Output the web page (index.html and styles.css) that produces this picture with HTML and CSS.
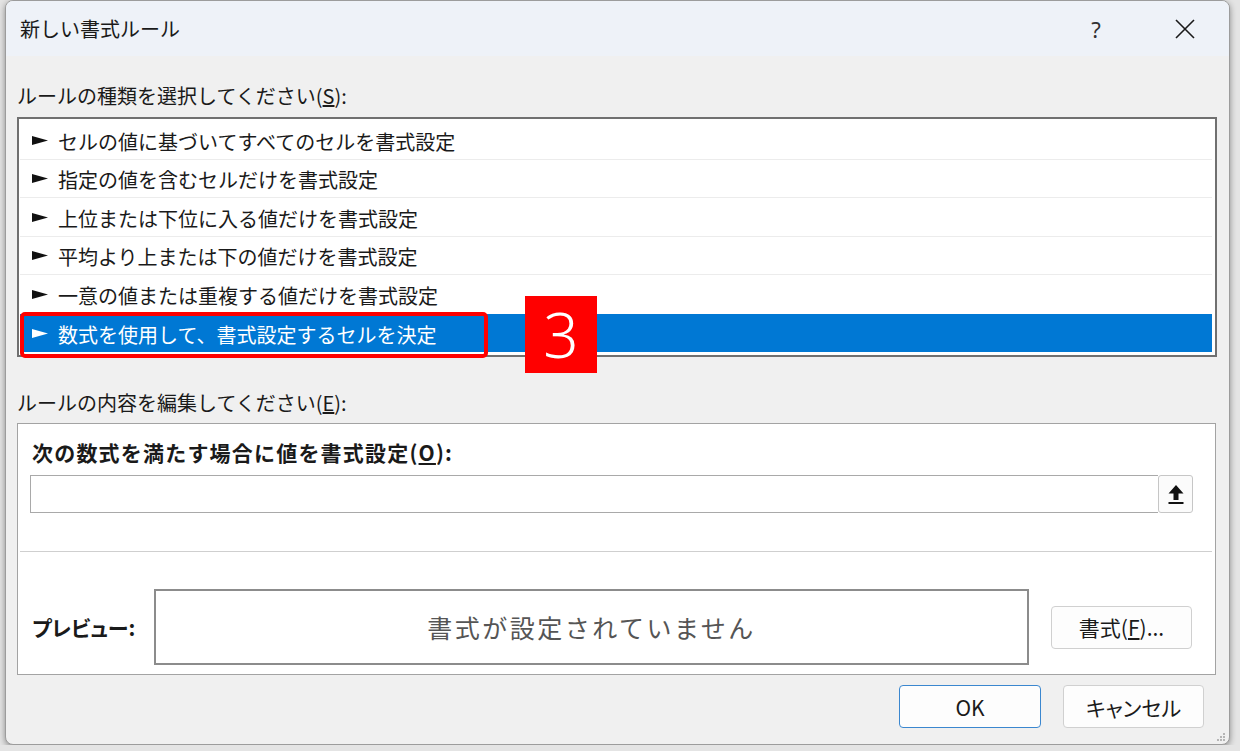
FILE: index.html
```html
<!DOCTYPE html>
<html>
<head>
    <meta charset="utf-8">
    <title>新しい書式ルール</title>
    <link rel="stylesheet" href="styles.css">
</head>
<body>
    <div class="dialog">
        <!-- Title bar -->
        <div class="titlebar">
            <span class="title">新しい書式ルール</span>
            <span class="tb-btn help">?</span>
            <span class="tb-btn close">
                <svg width="20" height="20" viewBox="0 0 20 20"><path d="M1 1 L19 19 M19 1 L1 19" stroke="#1a1a1a" stroke-width="1.6" fill="none"/></svg>
            </span>
        </div>

        <div class="content">
            <div class="label first">ルールの種類を選択してください(<u>S</u>):</div>

            <!-- Rule type list -->
            <div class="listbox">
                <div class="row"><svg class="arrow" viewBox="0 0 16 9"><polygon points="0,0 16,4.5 0,9"/></svg>セルの値に基づいてすべてのセルを書式設定</div>
                <div class="row"><svg class="arrow" viewBox="0 0 16 9"><polygon points="0,0 16,4.5 0,9"/></svg>指定の値を含むセルだけを書式設定</div>
                <div class="row"><svg class="arrow" viewBox="0 0 16 9"><polygon points="0,0 16,4.5 0,9"/></svg>上位または下位に入る値だけを書式設定</div>
                <div class="row"><svg class="arrow" viewBox="0 0 16 9"><polygon points="0,0 16,4.5 0,9"/></svg>平均より上または下の値だけを書式設定</div>
                <div class="row no-line"><svg class="arrow" viewBox="0 0 16 9"><polygon points="0,0 16,4.5 0,9"/></svg>一意の値または重複する値だけを書式設定</div>
                <div class="row selected"><svg class="arrow" viewBox="0 0 16 9"><polygon points="0,0 16,4.5 0,9"/></svg>数式を使用して、書式設定するセルを決定</div>

                <!-- annotation -->
                <div class="annot-box"></div>
                <div class="annot-num">3</div>
            </div>

            <div class="label second">ルールの内容を編集してください(<u>E</u>):</div>

            <!-- Rule description -->
            <div class="panel">
                <div class="panel-title">次の数式を満たす場合に値を書式設定(<u>O</u>):</div>
                <div class="formula">
                    <div class="formula-input"></div>
                    <div class="ref-btn">
                        <svg width="16" height="20" viewBox="0 0 16 20"><polygon points="8,1 15.5,9.5 10.5,9.5 10.5,16 5.5,16 5.5,9.5 0.5,9.5" fill="#111"/><rect x="0.5" y="18" width="15" height="2" fill="#111"/></svg>
                    </div>
                </div>
                <div class="divider"></div>
                <div class="preview-row">
                    <span class="preview-label">プレビュー:</span>
                    <div class="preview-box">書式が設定されていません</div>
                    <div class="btn fmt-btn">書式(<u>F</u>)...</div>
                </div>
            </div>

            <div class="footer">
                <div class="btn ok">OK</div>
                <div class="btn cancel">キャンセル</div>
            </div>
        </div>

        <svg class="grip" width="10" height="10" viewBox="0 0 10 10">
            <rect x="7" y="1" width="2" height="2" fill="#b5b5b5"/>
            <rect x="4" y="4" width="2" height="2" fill="#b5b5b5"/>
            <rect x="7" y="4" width="2" height="2" fill="#b5b5b5"/>
            <rect x="1" y="7" width="2" height="2" fill="#b5b5b5"/>
            <rect x="4" y="7" width="2" height="2" fill="#b5b5b5"/>
            <rect x="7" y="7" width="2" height="2" fill="#b5b5b5"/>
        </svg>
    </div>
</body>
</html>
```

FILE: styles.css
```css
body {
    margin: 0;
    background: #e4e4e4;
    font-family: "Noto Sans CJK JP", "Noto Sans", sans-serif;
    color: #1a1a1a;
}

.dialog {
    position: relative;
    margin-left: 5px;
    width: 1225px;
    height: 745px;
    box-sizing: border-box;
    border: 1px solid #9c9c9c;
    border-radius: 8px;
    background: #f0f0f0;
    overflow: hidden;
    box-shadow: 0 2px 6px rgba(0, 0, 0, 0.4);
}

/* Title bar */
.titlebar {
    height: 55px;
    display: flex;
    align-items: center;
    padding: 0 21px 0 14px;
    background: #eef2f8;
}

.title {
    font-size: 20px;
    flex: 1;
}

.tb-btn {
    width: 46px;
    display: flex;
    justify-content: center;
    align-items: center;
}

.help {
    font-family: "Noto Sans", sans-serif;
    font-size: 22px;
    color: #333;
}

.close {
    margin-left: 43px;
}

/* Content */
.content {
    padding: 0 12px 0 11px;
}

.label {
    height: 26px;
    line-height: 26px;
    font-size: 20px;
}

.label.first {
    margin-top: 27px;
}

.label.second {
    margin-top: 33px;
}

.listbox {
    position: relative;
    margin-top: 8px;
    height: 240px;
    box-sizing: border-box;
    border: 2px solid #707070;
    background: #fff;
    padding: 2px 3px 3px 1px;
}

.row {
    height: 38.5px;
    box-sizing: border-box;
    display: flex;
    align-items: center;
    padding: 3px 0 0 12px;
    font-size: 20px;
    border-bottom: 1px solid #ececec;
}

.row.no-line {
    border-bottom-color: transparent;
}

.row.selected {
    background: #0078d4;
    color: #fff;
    border-bottom: none;
}

.arrow {
    width: 16px;
    height: 9px;
    margin: -2px 10px 0 0;
    fill: #111;
}

.selected .arrow {
    fill: #fff;
}

.annot-box {
    position: absolute;
    left: 1px;
    top: 193px;
    width: 468px;
    height: 46px;
    box-sizing: border-box;
    border: 4px solid #f00;
    border-radius: 5px;
}

.annot-num {
    position: absolute;
    left: 506px;
    top: 177px;
    width: 72px;
    height: 77px;
    background: #f00;
    color: #fff;
    font-family: "Noto Sans", sans-serif;
    font-weight: 300;
    font-size: 62px;
    line-height: 77px;
    text-align: center;
}

/* Rule description panel */
.panel {
    margin-top: 7px;
    margin-right: 1px;
    border: 1px solid #a3a3a3;
    background: #fff;
    padding: 15px 22px 9px 12px;
}

.panel-title {
    padding-left: 2px;
    height: 26px;
    line-height: 26px;
    font-size: 21px;
    font-weight: bold;
    letter-spacing: 1.2px;
}

.formula {
    margin-top: 10px;
    height: 38px;
    display: flex;
}

.formula-input {
    flex: 1;
    border: 1px solid #a9a9a9;
    border-right: none;
}

.ref-btn {
    width: 35px;
    box-sizing: border-box;
    border: 1px solid #c6c6c6;
    border-radius: 3px;
    background: #fbfbfb;
    display: flex;
    justify-content: center;
    align-items: center;
}

.divider {
    margin: 38px -19px 0 -10px;
    height: 1px;
    background: #cfcfcf;
}

.preview-row {
    margin-top: 37px;
    display: flex;
    align-items: center;
    padding-left: 2px;
}

.preview-label {
    width: 122px;
    font-size: 21px;
    font-weight: bold;
    font-feature-settings: "palt";
}

.preview-box {
    width: 875px;
    height: 76px;
    box-sizing: border-box;
    border: 2px solid #8c8c8c;
    display: flex;
    justify-content: center;
    align-items: center;
    font-size: 25px;
    letter-spacing: 2.5px;
    color: #555;
}

.btn {
    height: 43px;
    box-sizing: border-box;
    border: 1px solid #d0d0d0;
    border-radius: 4px;
    background: #fdfdfd;
    display: flex;
    justify-content: center;
    align-items: center;
    font-size: 21px;
}

.fmt-btn {
    width: 141px;
    margin-left: 22px;
}

/* Footer */
.footer {
    margin-top: 10px;
    padding-right: 13px;
    display: flex;
    justify-content: flex-end;
    gap: 22px;
}

.ok {
    width: 142px;
    border-color: #3b87cf;
}

.cancel {
    width: 141px;
    font-feature-settings: "palt";
}

.grip {
    position: absolute;
    right: 3px;
    bottom: 2px;
}
```
